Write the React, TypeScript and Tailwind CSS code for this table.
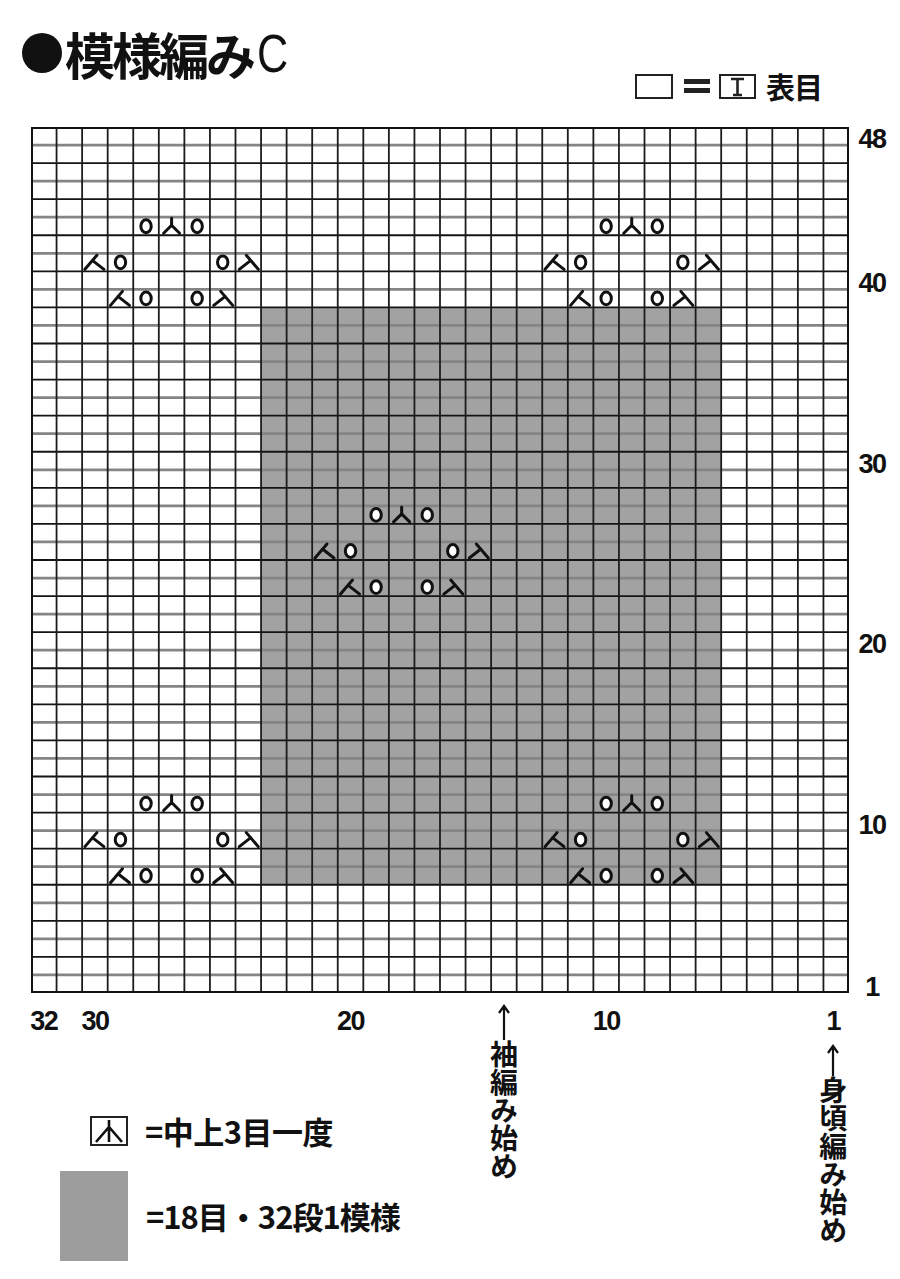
import React from "react";

// 編み図の寸法
const COLS = 32;
const ROWS = 48;
const W = 818;
const H = 866;
const CW = W / COLS;
const CH = H / ROWS;

// 目数は右から、段数は下から数える
const cx = (c: number) => W - (c - 0.5) * CW;
const cy = (r: number) => H - (r - 0.5) * CH;

type Sym = { kind: "yo" | "ldec" | "rdec" | "c3"; c: number; r: number };

const motifCenters = [
  { c: 27, r: 43 },
  { c: 9, r: 43 },
  { c: 18, r: 27 },
  { c: 27, r: 11 },
  { c: 9, r: 11 },
];

function buildSymbols(): Sym[] {
  const out: Sym[] = [];
  motifCenters.forEach(({ c, r }) => {
    out.push({ kind: "yo", c: c + 1, r });
    out.push({ kind: "c3", c, r });
    out.push({ kind: "yo", c: c - 1, r });

    out.push({ kind: "ldec", c: c + 3, r: r - 2 });
    out.push({ kind: "yo", c: c + 2, r: r - 2 });
    out.push({ kind: "yo", c: c - 2, r: r - 2 });
    out.push({ kind: "rdec", c: c - 3, r: r - 2 });

    out.push({ kind: "ldec", c: c + 2, r: r - 4 });
    out.push({ kind: "yo", c: c + 1, r: r - 4 });
    out.push({ kind: "yo", c: c - 1, r: r - 4 });
    out.push({ kind: "rdec", c: c - 2, r: r - 4 });
  });
  return out;
}

function Symbol({ s }: { s: Sym }) {
  const x = cx(s.c);
  const y = cy(s.r);
  if (s.kind === "yo") {
    return <ellipse cx={x} cy={y} rx={5.2} ry={6.4} fill="#fff" stroke="#111" strokeWidth={3} />;
  }
  const d =
    s.kind === "ldec"
      ? "M-10 7 L2 -7 M-2.5 -2 L9 7"
      : s.kind === "rdec"
      ? "M10 7 L-2 -7 M2.5 -2 L-9 7"
      : "M0 -8 L0 0 M-8 7 L0 -1 L8 7";
  return (
    <g transform={`translate(${x} ${y})`}>
      <path d={d} fill="none" stroke="#111" strokeWidth={3} strokeLinecap="round" strokeLinejoin="round" />
    </g>
  );
}

function Chart() {
  const symbols = buildSymbols();
  return (
    <svg width={W} height={H} viewBox={`0 0 ${W} ${H}`} className="block shrink-0">
      <rect x={0} y={0} width={W} height={H} fill="#fff" />
      {/* 1模様 (18目・32段) */}
      <rect x={W - 23 * CW} y={H - 38 * CH} width={18 * CW} height={32 * CH} fill="#a2a2a2" />

      {Array.from({ length: ROWS + 1 }, (_, k) => (
        <line
          key={"h" + k}
          x1={0}
          x2={W}
          y1={k * CH}
          y2={k * CH}
          stroke={k % 2 === 0 ? "#141414" : "#858585"}
          strokeWidth={k % 2 === 0 ? 1.8 : 2.8}
        />
      ))}
      {Array.from({ length: COLS + 1 }, (_, i) => (
        <line key={"v" + i} x1={i * CW} x2={i * CW} y1={0} y2={H} stroke="#1c1c1c" strokeWidth={1.8} />
      ))}
      <rect x={1} y={1} width={W - 2} height={H - 2} fill="none" stroke="#141414" strokeWidth={2} />

      {symbols.map((s, i) => (
        <Symbol key={i} s={s} />
      ))}
    </svg>
  );
}

function UpArrow({ h }: { h: number }) {
  return (
    <svg width={14} height={h} viewBox={`0 0 14 ${h}`} className="block">
      <path d={`M7 2 L7 ${h} M2 9 L7 2 L12 9`} fill="none" stroke="#111" strokeWidth={2.2} />
    </svg>
  );
}

const jp = "font-['Noto_Sans_CJK_JP',sans-serif]";
const num = "font-['Liberation_Sans',sans-serif] font-bold text-[27px] leading-[28px] tracking-[-1.5px] text-[#111]";

export default function App() {
  const rowLabels = [
    { n: 48, cls: "row-start-1" },
    { n: 40, cls: "row-start-9" },
    { n: 30, cls: "row-start-19" },
    { n: 20, cls: "row-start-29" },
    { n: 10, cls: "row-start-39" },
    { n: 1, cls: "row-start-48" },
  ];

  return (
    <div className={`w-[900px] h-[1279px] bg-white overflow-hidden text-[#111] ${jp}`}>
      {/* ヘッダー */}
      <div className="h-[127px] flex flex-col">
        <div className="pl-[22px] pt-[24px] h-[82px] font-bold whitespace-nowrap flex items-center">
          <span className="w-[40px] h-[40px] rounded-full bg-[#111] shrink-0" />
          <span className="ml-[3px] text-[50px] leading-[58px] tracking-[-3px]">模様編み</span>
          <span className="ml-[4px] font-['Liberation_Sans',sans-serif] font-normal text-[54px] leading-[58px] scale-x-[0.8] origin-left">
            C
          </span>
        </div>
        <div className="-mt-[10px] flex justify-end items-center pr-[78px] h-[28px]">
          <div className="w-[38px] h-[25px] border-2 border-[#222]" />
          <div className="ml-[11px] flex flex-col gap-[4px]">
            <div className="w-[26px] h-[5px] bg-[#222]" />
            <div className="w-[26px] h-[5px] bg-[#222]" />
          </div>
          <svg width={37} height={25} viewBox="0 0 37 25" className="ml-[9px] block">
            <rect x={1} y={1} width={35} height={23} fill="none" stroke="#222" strokeWidth={2} />
            <path d="M12 5 L25 5 M18.5 5 L18.5 21 M14 21 L23 21" fill="none" stroke="#222" strokeWidth={2.6} />
          </svg>
          <span className="ml-[10px] text-[29px] leading-[28px] font-bold tracking-[-1px]">表目</span>
        </div>
      </div>

      {/* 編み図と段数 */}
      <div className="flex ml-[31px]">
        <Chart />
        <div className={`grid grid-rows-[repeat(48,minmax(0,1fr))] h-[866px] w-[44px] ml-[1px] ${num}`}>
          {rowLabels.map((l) => (
            <div key={l.n} className={`${l.cls} flex justify-center items-center translate-y-[3px] whitespace-nowrap`}>
              {l.n}
            </div>
          ))}
        </div>
      </div>

      {/* 目数・編み始め・記号説明 */}
      <div className="ml-[31px] mt-[7px] w-[818px] h-[272px] grid grid-cols-[repeat(32,minmax(0,1fr))] grid-rows-[34px_238px]">
        <div className={`col-start-1 row-start-1 flex justify-center pt-[7px] ${num}`}>32</div>
        <div className={`col-start-3 row-start-1 flex justify-center pt-[7px] ${num}`}>30</div>
        <div className={`col-start-13 row-start-1 flex justify-center pt-[7px] ${num}`}>20</div>
        <div className={`col-start-23 row-start-1 flex justify-center pt-[7px] ${num}`}>10</div>

        <div className="col-start-19 row-start-1 row-span-2 flex flex-col items-center pt-[4px]">
          <UpArrow h={36} />
          <div className="[writing-mode:vertical-rl] [text-orientation:upright] text-[28px] leading-[30px] font-bold whitespace-nowrap">
            袖編み始め
          </div>
        </div>

        <div className="col-start-32 row-start-1 row-span-2 flex flex-col items-center pt-[7px]">
          <div className={`${num} -translate-x-[3px]`}>1</div>
          <div className="mt-[9px] -translate-x-[3px]">
            <UpArrow h={32} />
          </div>
          <div className="-translate-x-[3px] [writing-mode:vertical-rl] [text-orientation:upright] text-[28px] leading-[30px] font-bold whitespace-nowrap">
            身頃編み始め
          </div>
        </div>

        <div className="col-start-1 col-span-16 row-start-2 flex flex-col">
          <div className="mt-[79px] ml-[59px] h-[36px] flex items-center">
            <svg width={38} height={30} viewBox="0 0 38 30" className="block">
              <rect x={1} y={1} width={36} height={28} fill="none" stroke="#222" strokeWidth={2} />
              <path d="M19 4 L19 26 M6 26 L19 11 L32 26" fill="none" stroke="#111" strokeWidth={2.6} />
            </svg>
            <span className="ml-[17px] text-[31px] leading-[36px] font-bold tracking-[-0.5px] whitespace-nowrap">
              =中上3目一度
            </span>
          </div>
          <div className="mt-[22px] ml-[29px] flex items-center">
            <div className="w-[68px] h-[90px] bg-[#9d9d9d]" />
            <span className="ml-[18px] text-[31px] leading-[36px] font-bold tracking-[-1px] whitespace-nowrap">
              =18目・32段1模様
            </span>
          </div>
        </div>
      </div>
    </div>
  );
}
